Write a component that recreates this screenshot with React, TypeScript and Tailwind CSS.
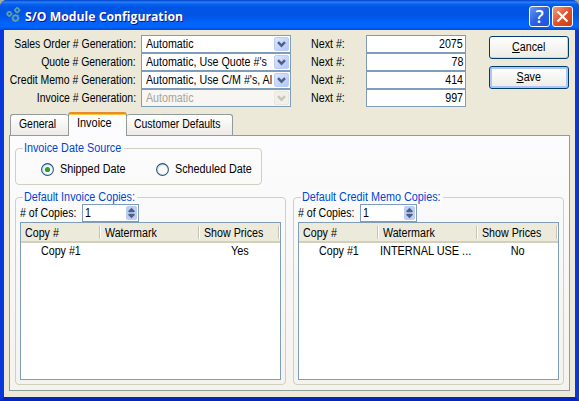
import type { ReactNode } from "react";

const UI = '"Liberation Sans", Arial, sans-serif';

// Narrow label text in the style of the classic Windows dialog font.
function T({ children, className = "origin-left scale-x-[0.89]" }: { children: ReactNode; className?: string }) {
  return <span className={`inline-block whitespace-nowrap ${className}`}>{children}</span>;
}

function Chevron({ color }: { color: string }) {
  return (
    <svg width="9" height="7" viewBox="0 0 9 7" fill="none">
      <path d="M1 1.2L4.5 4.7L8 1.2" stroke={color} strokeWidth="2.4" />
    </svg>
  );
}

function Field({ label, value, next, disabled }: { label: string; value: string; next: string; disabled?: boolean }) {
  return (
    <div className="flex h-[18px] items-center">
      <div className="flex w-[132px] justify-end">
        <T className="origin-right scale-x-[0.87]">{label}</T>
      </div>
      <div
        className={`ml-[5px] flex h-[18px] w-[150px] items-center border p-px pl-1 ${
          disabled ? "border-[#7f9db9] bg-[#f7f6f2] text-[#a6a595]" : "border-[#7f9db9] bg-white"
        }`}
      >
        <div className="w-[128px]">
          <T>{value}</T>
        </div>
        <div
          className={`flex h-[14px] w-[15px] shrink-0 items-center justify-center rounded-[2px] border ${
            disabled ? "border-[#e8e7df] bg-[#f2f0e7]" : "border-[#bccdf8] bg-gradient-to-br from-[#dce6ff] to-[#b3c8f8]"
          }`}
        >
          <Chevron color={disabled ? "#c9c7ba" : "#4d6185"} />
        </div>
      </div>
      <div className="ml-5 w-[55px]">
        <T>Next #:</T>
      </div>
      <div className="flex h-[18px] w-[100px] items-center justify-end border border-[#7f9db9] bg-white pr-[2px]">
        <T className="origin-right scale-x-[0.89]">{next}</T>
      </div>
    </div>
  );
}

function Button({ hot, rest, focus }: { hot: string; rest: string; focus?: boolean }) {
  return (
    <button
      className={`flex h-[23px] w-20 items-center justify-center rounded-[3px] border border-[#003c74] bg-gradient-to-b from-white to-[#ecebe5] pb-[2px] ${
        focus ? "shadow-[inset_0_0_0_2px_#adc6f5]" : "shadow-[inset_-1px_-1px_0_#d6d0c5]"
      }`}
    >
      <T className="origin-center scale-x-[0.89]">
        <span className="underline underline-offset-1">{hot}</span>
        {rest}
      </T>
    </button>
  );
}

function Group({ title, className, children }: { title: string; className: string; children: ReactNode }) {
  return (
    <div className={`rounded-[4px] border border-[#d0d0bf] ${className}`}>
      <div className="-mt-[9px] ml-[7px] flex h-4 items-start">
        <T className="origin-left scale-x-[0.9] bg-[#fbfbfc] pr-[3px] pl-px text-[#0046d5]">{title}</T>
      </div>
      {children}
    </div>
  );
}

function Radio({ label, checked }: { label: string; checked?: boolean }) {
  return (
    <div className="flex w-[115px] shrink-0 items-center">
      <svg width="13" height="13" viewBox="0 0 13 13" className="shrink-0">
        <circle cx="6.5" cy="6.5" r="5.9" fill="#e6e6e2" stroke="#21598a" strokeWidth="1.1" />
        <circle cx="7" cy="7" r="4.4" fill="#fafaf9" />
        {checked && <circle cx="6.5" cy="6.5" r="2.6" fill="#28a428" />}
      </svg>
      <div className="ml-[6px]">
        <T className="origin-left scale-x-[0.9]">{label}</T>
      </div>
    </div>
  );
}

function Head({ children, className }: { children: ReactNode; className: string }) {
  return (
    <div className={`flex h-[19px] items-center pl-1 ${className}`}>
      <div className="grow">
        <T>{children}</T>
      </div>
      <div className="h-[13px] w-[2px] border-l border-[#c7c5b2] bg-white" />
    </div>
  );
}

function Copies({ title, watermark, show }: { title: string; watermark: string; show: string }) {
  return (
    <Group title={title} className="h-[188px] w-[271px]">
      <div className="relative z-10 -mt-px flex h-[18px] items-center pl-1">
        <div className="w-[62px]">
          <T className="origin-left scale-x-[0.88]">{"# of Copies:"}</T>
        </div>
        <div className="flex h-[18px] w-[57px] items-center border border-[#7f9db9] bg-white pr-px pl-[2px]">
          <div className="grow">
            <T>1</T>
          </div>
          <div className="flex h-[14px] w-[11px] items-center justify-center rounded-[2px] bg-[#bccdf8]">
            <svg width="7" height="12" viewBox="0 0 7 12" fill="#4d6185">
              <path d="M0 4.2L3.5 0.7L7 4.2L6 5.2H1ZM0 7.8L3.5 11.3L7 7.8L6 6.8H1Z" />
            </svg>
          </div>
        </div>
      </div>
      <div className="ml-1 h-[158px] w-[261px] border border-[#7f9db9] bg-white">
        <div className="flex h-5 border-b-2 border-[#d3cfbd] bg-[#ebeadb]">
          <Head className="w-20">{"Copy #"}</Head>
          <Head className="w-[99px]">Watermark</Head>
          <Head className="w-20">Show Prices</Head>
        </div>
        <div className="flex h-4 items-center">
          <div className="w-[80px] pl-5">
            <T>{"Copy #1"}</T>
          </div>
          <div className="w-[99px] pl-px">
            <T className="origin-left scale-x-[0.91]">{watermark}</T>
          </div>
          <div className="flex w-20 justify-center">
            <T className="origin-center scale-x-[0.91]">{show}</T>
          </div>
        </div>
      </div>
    </Group>
  );
}

export default function App() {
  return (
    <div className="h-[401px] w-[579px] overflow-hidden bg-[#aca899] text-[12px] leading-4 text-black" style={{ fontFamily: UI }}>
      <div className="flex h-full flex-col overflow-hidden rounded-t-[7px] bg-[#0831d9]">
        <div className="flex h-[30px] shrink-0 items-center bg-[linear-gradient(#0040c8_0%,#2a80f8_7%,#0562ee_14%,#0055e5_25%,#0054e3_50%,#0262fb_75%,#0066ff_90%,#0048d8_100%)] px-[6px]">
          <svg width="16" height="16" viewBox="0 0 16 16" fill="none" stroke="#5f9fa8" strokeWidth="1.6">
            <circle cx="3.3" cy="6.8" r="1.9" />
            <circle cx="11.2" cy="3.2" r="1.9" />
            <circle cx="9.5" cy="11" r="2.6" />
            <path d="M3.3 3.9V5M3.3 8.7V10M.3 6.8H1.4M5.2 6.8H6.4M11.2 0V1.3M13 3.2H14.5M8 3.2H9.3M11.2 5V6.2M9.5 7.2V8.4M9.5 13.6V15M12 11H13.5M5.6 11H7M7 8.4L7.8 9.2M11.4 12.9L12.4 13.9M7.6 12.9L6.6 13.9M11.4 9.1L12.4 8.1" />
          </svg>
          <div className="ml-[3px] grow pt-px font-['Open_Sans'] text-[13px] font-bold text-white [text-shadow:1px_1px_#0f1089]">
            <span className="inline-block origin-left scale-x-[0.94] whitespace-nowrap">S/O Module Configuration</span>
          </div>
          <div className="mt-[3px] mr-[2px] flex h-[21px] w-[21px] items-center justify-center rounded-[3px] border border-white bg-gradient-to-br from-[#6c94f2] via-[#2b5fe3] to-[#1c54df]">
            <span className="-mt-px font-['Open_Sans'] text-[18px] leading-none font-semibold text-white">?</span>
          </div>
          <div className="mt-[3px] flex h-[21px] w-[21px] items-center justify-center rounded-[3px] border border-white bg-gradient-to-br from-[#f09c80] via-[#e0512c] to-[#c83c12]">
            <svg width="13" height="13" viewBox="0 0 13 13" stroke="white" strokeWidth="2.2">
              <path d="M1.5 1.5L11.5 11.5M11.5 1.5L1.5 11.5" />
            </svg>
          </div>
        </div>
        <div className="flex grow border-x-4 border-b-4 border-[#0838dc] border-b-[#0424ba] bg-[#ece9d8]">
          <div className="w-full pt-[5px]">
            <div className="flex">
              <div className="w-[485px]">
                <Field label="Sales Order # Generation:" value="Automatic" next="2075" />
                <Field label="Quote # Generation:" value="Automatic, Use Quote #'s" next="78" />
                <Field label="Credit Memo # Generation:" value="Automatic, Use C/M #'s, Al" next="414" />
                <Field label="Invoice # Generation:" value="Automatic" next="997" disabled />
              </div>
              <div className="flex flex-col gap-[7px] pt-px">
                <Button hot="C" rest="ancel" />
                <Button hot="S" rest="ave" focus />
              </div>
            </div>
            <div className="mt-[5px] ml-[6px] flex h-[23px] items-end">
              <div className="flex h-[21px] w-[58px] items-center rounded-t-[3px] border border-r-0 border-b-0 border-[#919b9c] bg-gradient-to-b from-white to-[#ecebe6] pb-[2px] pl-2">
                <T className="origin-left scale-x-[0.87]">General</T>
              </div>
              <div className="z-10 -mb-px flex h-6 w-[59px] items-center rounded-t-[3px] border-x border-t-2 border-x-[#919b9c] border-t-[#e68b2c] bg-[#fcfcfe] pb-[5px] pl-2 shadow-[inset_0_1px_#ffc73c]">
                <T className="origin-left scale-x-[0.91]">Invoice</T>
              </div>
              <div className="flex h-[21px] w-[106px] items-center rounded-t-[3px] border border-b-0 border-l-0 border-[#919b9c] bg-gradient-to-b from-white to-[#ecebe6] pb-[2px] pl-[7px]">
                <T className="origin-left scale-x-[0.87]">Customer Defaults</T>
              </div>
            </div>
            <div className="ml-[5px] h-[256px] w-[561px] border border-[#919b9c] bg-gradient-to-b from-[#fcfcfe] to-[#f4f3ee] pt-3 pl-[5px]">
              <Group title="Invoice Date Source" className="h-[37px] w-[247px]">
                <div className="mt-[5px] ml-[25px] flex">
                  <Radio label="Shipped Date" checked />
                  <Radio label="Scheduled Date" />
                </div>
              </Group>
              <div className="mt-3 flex gap-[7px]">
                <Copies title="Default Invoice Copies:" watermark="" show="Yes" />
                <Copies title="Default Credit Memo Copies:" watermark="INTERNAL USE ..." show="No" />
              </div>
            </div>
          </div>
        </div>
      </div>
    </div>
  );
}
